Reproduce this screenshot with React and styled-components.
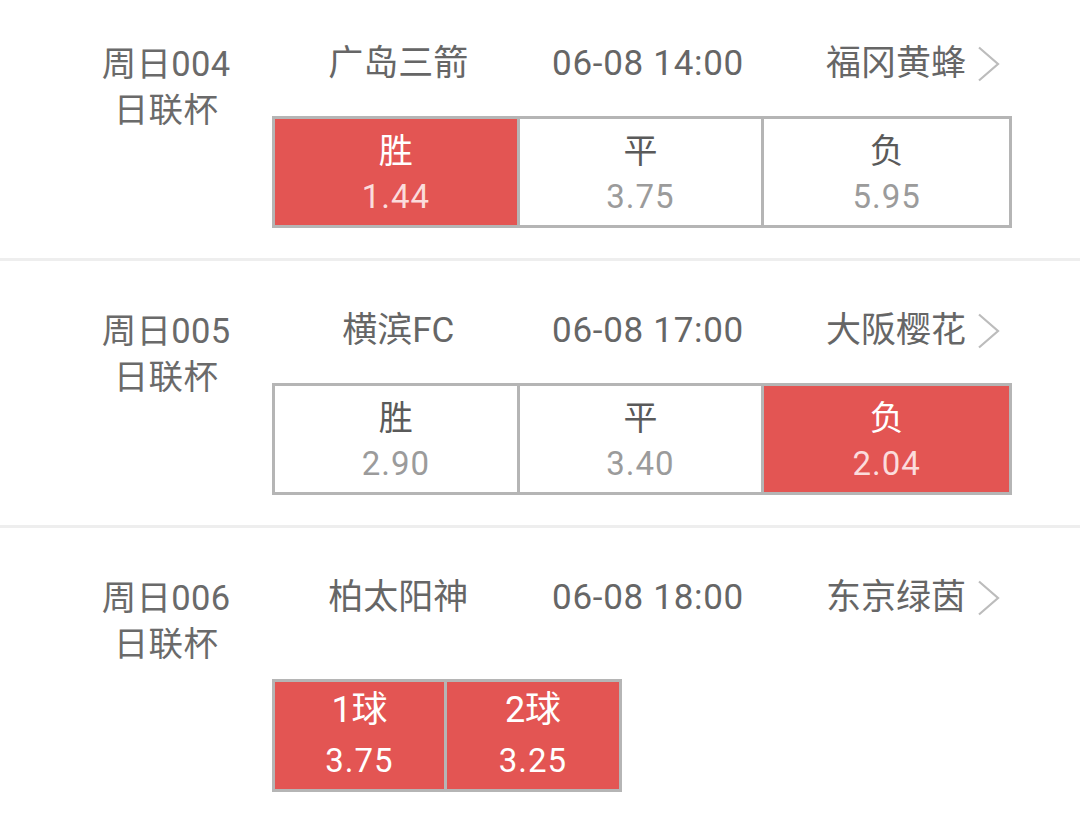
import React from 'react';
import styled, { createGlobalStyle } from 'styled-components';

const GlobalStyle = createGlobalStyle`
  html, body {
    margin: 0;
    padding: 0;
    background: #fff;
  }
  body {
    font-family: Roboto, "Noto Sans CJK SC", sans-serif;
    width: 1080px;
    overflow: hidden;
  }
`;

const RED = '#e35553';
const GRID = '#b5b5b5';

const List = styled.div`
  display: flex;
  flex-direction: column;
`;

const Row = styled.div`
  display: flex;
  padding: ${p => (p.first ? '41px' : '47px')} 68px 30px 0;
  border-bottom: ${p => (p.last ? 'none' : '3px solid #eeeeee')};
`;

const LeftCol = styled.div`
  width: 272px;
  padding-left: 60px;
  box-sizing: border-box;
  text-align: center;
  font-size: 34.5px;
  line-height: 46px;
  color: #6a6a6a;
  letter-spacing: 0.3px;
`;

const Main = styled.div`
  flex: 1;
  display: flex;
  flex-direction: column;
`;

const Header = styled.div`
  display: grid;
  grid-template-columns: 1fr 1fr 1fr;
  height: 46px;
  font-size: 35px;
  line-height: 46px;
  color: #666;
`;

const Team = styled.div`
  display: flex;
  align-items: center;
  justify-content: ${p => (p.right ? 'flex-end' : 'center')};
  padding-left: ${p => p.shift || 0}px;
  padding-right: ${p => (p.right ? 12 : 0)}px;
  gap: 11px;
  white-space: nowrap;
`;

const Time = styled(Team)`
  letter-spacing: 0.7px;
`;

const Chevron = () => (
  <svg width="23" height="36" viewBox="0 0 23 36" fill="none">
    <path d="M2 1.5 L21 18 L2 34.5" stroke="#bcbcbc" strokeWidth="2.2" />
  </svg>
);

const Box = styled.div`
  display: grid;
  grid-template-columns: repeat(${p => p.count}, 1fr);
  width: ${p => p.width}px;
  height: ${p => p.height}px;
  margin-top: ${p => p.gapTop}px;
  border: 3px solid ${GRID};
  box-sizing: border-box;
`;

const Cell = styled.div`
  display: flex;
  flex-direction: column;
  align-items: center;
  padding-top: ${p => p.pad}px;
  background: ${p => (p.active ? RED : '#fff')};
  border-right: 3px solid ${GRID};
  &:last-child {
    border-right: none;
  }
`;

const Label = styled.div`
  font-size: ${p => p.size}px;
  line-height: 46px;
  color: ${p => (p.active ? '#fff' : '#5a5a5a')};
`;

const Odds = styled.div`
  font-size: 33px;
  letter-spacing: 1px;
  line-height: 44px;
  margin-top: ${p => p.drop || 0}px;
  color: ${p => (p.active ? (p.bright ? '#fff' : '#fbdcdc') : '#9b9b9b')};
`;

const matches = [
  {
    no: '周日004', league: '日联杯', home: '广岛三箭', time: '06-08 14:00', away: '福冈黄蜂',
    odds: [['胜', '1.44', true], ['平', '3.75', false], ['负', '5.95', false]],
  },
  {
    no: '周日005', league: '日联杯', home: '横滨FC', time: '06-08 17:00', away: '大阪樱花',
    odds: [['胜', '2.90', false], ['平', '3.40', false], ['负', '2.04', true]],
  },
  {
    no: '周日006', league: '日联杯', home: '柏太阳神', time: '06-08 18:00', away: '东京绿茵',
    goals: [['1球', '3.75', true], ['2球', '3.25', true]],
  },
];

export default function App() {
  return (
    <>
      <GlobalStyle />
      <List>
        {matches.map((m, i) => (
          <Row key={m.no} first={i === 0} last={i === matches.length - 1}>
            <LeftCol>
              <div>{m.no}</div>
              <div>{m.league}</div>
            </LeftCol>
            <Main>
              <Header>
                <Team shift={6}>{m.home}</Team>
                <Time shift={12}>{m.time}</Time>
                <Team right>
                  <span>{m.away}</span>
                  <Chevron />
                </Team>
              </Header>
              {m.odds && (
                <Box count={3} width={740} height={112} gapTop={29}>
                  {m.odds.map(([l, o, a]) => (
                    <Cell key={l} active={a} pad={9}>
                      <Label active={a} size={34}>{l}</Label>
                      <Odds active={a} drop={1}>{o}</Odds>
                    </Cell>
                  ))}
                </Box>
              )}
              {m.goals && (
                <Box count={2} width={350} height={113} gapTop={58}>
                  {m.goals.map(([l, o, a]) => (
                    <Cell key={l} active={a} pad={5}>
                      <Label active={a} size={36}>{l}</Label>
                      <Odds active={a} bright drop={6}>{o}</Odds>
                    </Cell>
                  ))}
                </Box>
              )}
            </Main>
          </Row>
        ))}
      </List>
    </>
  );
}
